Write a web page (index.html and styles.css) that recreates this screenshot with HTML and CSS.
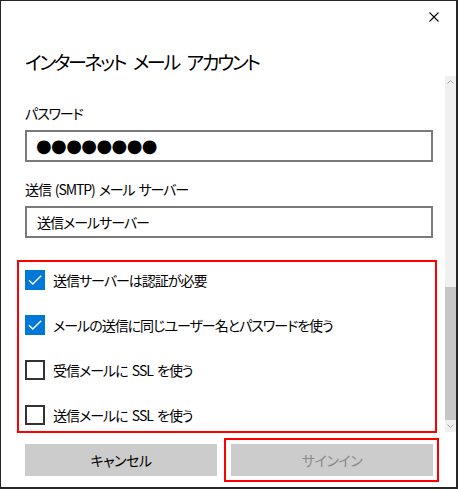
FILE: index.html
```html
<!DOCTYPE html>
<html lang="ja">
<head>
    <meta charset="UTF-8">
    <title>インターネット メール アカウント</title>
    <link rel="stylesheet" href="styles.css">
</head>
<body>
<div class="window">
    <div class="topbar">
        <span class="close">
            <svg width="10" height="10" viewBox="0 0 10 10"><path d="M0.5 0.5L9.5 9.5M9.5 0.5L0.5 9.5" stroke="#000" stroke-width="1.1" fill="none"/></svg>
        </span>
    </div>
    <h1 class="title">インターネット メール アカウント</h1>

    <div class="body">
        <div class="content">
            <div class="field-label">パスワード</div>
            <div class="textbox dots">●●●●●●●●</div>

            <div class="field-label">送信 (SMTP) メール サーバー</div>
            <div class="textbox">送信メールサーバー</div>

            <div class="options marked">
                <div class="option">
                    <span class="check on"><svg width="20" height="20" viewBox="0 0 20 20"><path d="M4 10.3L7.8 14.1L16.2 5.7" stroke="#fff" stroke-width="1.4" fill="none"/></svg></span>
                    <span>送信サーバーは認証が必要</span>
                </div>
                <div class="option">
                    <span class="check on"><svg width="20" height="20" viewBox="0 0 20 20"><path d="M4 10.3L7.8 14.1L16.2 5.7" stroke="#fff" stroke-width="1.4" fill="none"/></svg></span>
                    <span>メールの送信に同じユーザー名とパスワードを使う</span>
                </div>
                <div class="option">
                    <span class="check"></span>
                    <span>受信メールに SSL を使う</span>
                </div>
                <div class="option">
                    <span class="check"></span>
                    <span>送信メールに SSL を使う</span>
                </div>
            </div>
        </div>
        <div class="scrollbar">
            <div class="arrow"><svg width="7" height="4" viewBox="0 0 7 4"><path d="M0.5 3.5L3.5 0.5L6.5 3.5" stroke="#a6a6a6" fill="none"/></svg></div>
            <div class="track"><div class="thumb"></div></div>
            <div class="arrow"><svg width="7" height="4" viewBox="0 0 7 4"><path d="M0.5 0.5L3.5 3.5L6.5 0.5" stroke="#a6a6a6" fill="none"/></svg></div>
        </div>
    </div>

    <div class="footer">
        <div class="btn">キャンセル</div>
        <div class="marked signin-mark">
            <div class="btn disabled">サインイン</div>
        </div>
    </div>
</div>
</body>
</html>
```

FILE: styles.css
```css
body{ margin:0; font-family:"Noto Sans CJK JP","Noto Sans",sans-serif; }

.window{
    width:458px;
    height:489px;
    box-sizing:border-box;
    border-style:solid;
    border-color:#262626;
    border-width:1px 2px 2px 1px;
    background:#fff;
    color:#000;
    display:flex;
    flex-direction:column;
    font-feature-settings:"palt";
}

.topbar{
    height:31px;
    display:flex;
    justify-content:flex-end;
    align-items:center;
    padding-right:17px;
}
.close{ display:flex; width:10px; height:10px; }

.title{
    margin:16px 0 0 24px;
    font-size:19px;
    line-height:28px;
    letter-spacing:-2.4px;
    word-spacing:6px;
    font-weight:normal;
}

.body{
    height:356px;
    flex:none;
    display:flex;
}
.content{
    flex:1;
    padding:27px 12px 0 24px;
}

.field-label{
    font-size:14px;
    line-height:20px;
    letter-spacing:-1.1px;
    word-spacing:2px;
    margin-bottom:7px;
}
.textbox{
    height:32px;
    box-sizing:border-box;
    border:2px solid #7a7a7a;
    padding-left:10px;
    font-size:14px;
    letter-spacing:-1px;
    line-height:28px;
    margin-bottom:17px;
}
.textbox.dots{
    font-family:"DejaVu Sans",sans-serif;
    font-size:18px;
    letter-spacing:-0.6px;
    padding-left:9px;
}

.marked{ border:2px solid #ff0000; }

.options{
    margin:22px -4px 0 -8px;
    padding:8px 0 6px 6px;
    display:flex;
    flex-direction:column;
    gap:25px;
}
.option{
    display:flex;
    align-items:center;
    gap:8px;
    height:20px;
    font-size:14px;
    letter-spacing:-1px;
    word-spacing:2px;
}
.check{
    width:20px;
    height:20px;
    box-sizing:border-box;
    border:2px solid #333;
    flex:none;
}
.check.on{
    border:none;
    background:#0078d7;
}
.check svg{ display:block; }

.scrollbar{
    width:11px;
    background:#f0f0f0;
    display:flex;
    flex-direction:column;
}
.arrow{
    height:12px;
    display:flex;
    align-items:center;
    justify-content:center;
}
.track{
    flex:1;
    display:flex;
    flex-direction:column;
    justify-content:flex-end;
}
.thumb{
    height:133px;
    background:#c6c6c6;
}

.footer{
    flex:1;
    display:flex;
    align-items:flex-start;
    gap:7px;
    padding:6px 17px 0 24px;
}
.btn{
    height:32px;
    line-height:32px;
    background:#cccccc;
    text-align:center;
    font-size:14px;
    letter-spacing:-0.5px;
    color:#000;
}
.footer > .btn{ width:192px; margin-top:6px; }
.signin-mark{
    flex:1;
    padding:4px 4px 4px 5px;
}
.btn.disabled{ color:#8a8a8a; }
```
